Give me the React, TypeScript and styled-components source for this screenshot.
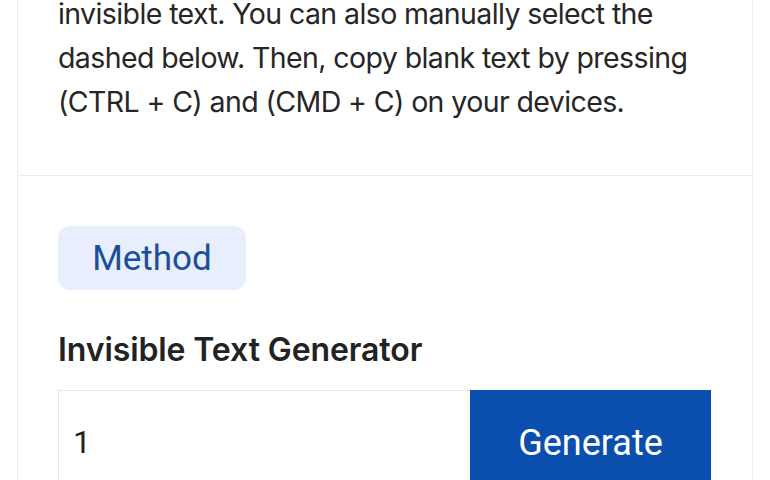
import styled, { createGlobalStyle } from 'styled-components';

const GlobalStyle = createGlobalStyle`
  body {
    margin: 0;
    background: #ffffff;
    font-family: Inter, "Open Sans", sans-serif;
    color: #222222;
    overflow: hidden;
  }
`;

export const App = () => {
  return (
    <>
      <GlobalStyle />
      <Card>
        <IntroSection>
          <Intro>
            invisible text. You can also manually select the
            <br />
            dashed below. Then, copy blank text by pressing
            <br />
            (CTRL + C) and (CMD + C) on your devices.
          </Intro>
        </IntroSection>

        <ToolSection>
          <Pill>Method</Pill>
          <Heading>Invisible Text Generator</Heading>
          <Row>
            <CountInput defaultValue="1" />
            <GenerateButton>Generate</GenerateButton>
          </Row>
        </ToolSection>
      </Card>
    </>
  );
};

const Card = styled.div`
  margin: -8px 17px 0;
  border-left: 1px solid #ececec;
  border-right: 1px solid #ececec;
`;
//-----------------------------------------------------------
const IntroSection = styled.div`
  padding: 0 40px 51px;
  border-bottom: 1px solid #ebebeb;
`;

const Intro = styled.p`
  margin: 0;
  white-space: nowrap;
  font-size: 28.5px;
  line-height: 44px;
  letter-spacing: -0.6px;
  color: #262626;
`;
// ------------------------------------------------------
const ToolSection = styled.div`
  padding: 50px 40px 40px;
`;

const Pill = styled.div`
  display: inline-flex;
  align-items: center;
  justify-content: center;
  width: 188px;
  height: 64px;
  border-radius: 12px;
  background-color: #e8eefb;
  color: #1d4f98;
  font-family: Roboto, sans-serif;
  font-size: 35px;
`;

const Heading = styled.h2`
  margin: 38px 0 18px;
  font-size: 32px;
  font-weight: 600;
  letter-spacing: -0.1px;
  line-height: 44px;
  color: #222222;
`;

const Row = styled.div`
  display: flex;
  height: 110px;
`;

const CountInput = styled.input`
  width: 412px;
  box-sizing: border-box;
  border: 1px solid #e6e6e6;
  border-right: none;
  padding: 0 14px 6px;
  font-family: Roboto, sans-serif;
  font-size: 32px;
  color: #222222;
  outline: none;
`;

const GenerateButton = styled.button`
  width: 241px;
  border: none;
  padding: 0 0 4px;
  background-color: #0a4fad;
  color: #ffffff;
  font-family: Roboto, sans-serif;
  font-size: 36px;
  cursor: pointer;
`;

export default App;
